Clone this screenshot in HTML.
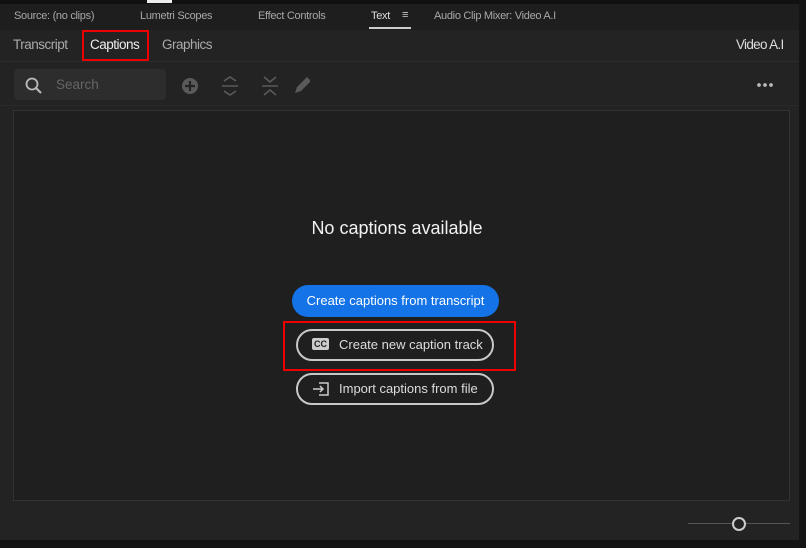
<!DOCTYPE html>
<html><head><style>
*{margin:0;padding:0;box-sizing:border-box}
body{width:806px;height:548px;background:#232323;font-family:"Liberation Sans",sans-serif;position:relative;overflow:hidden;color:#bbb}
.a{position:absolute}
.t{letter-spacing:-0.3px}
</style></head><body>
<div class="a" style="left:0;top:0;width:806px;height:4px;background:#101010"></div>
<div class="a" style="left:147px;top:0;width:25px;height:3px;background:#eee"></div>
<div class="a" style="left:0;top:4px;width:806px;height:26px;background:#1e1e1e"></div>
<div class="a" style="left:799px;top:0;width:7px;height:548px;background:#141414"></div>
<div class="a" style="left:0;top:540px;width:806px;height:8px;background:#141414"></div>
<div class="a t" style="left:14px;top:10px;font-size:11px;color:#a8a8a8">Source: (no clips)</div>
<div class="a t" style="left:140px;top:10px;font-size:11px;color:#a8a8a8">Lumetri Scopes</div>
<div class="a t" style="left:258px;top:10px;font-size:11px;color:#a8a8a8">Effect Controls</div>
<div class="a t" style="left:371px;top:10px;font-size:11px;color:#ddd">Text</div>
<div class="a" style="left:402px;top:9px;font-size:11px;color:#ccc">&#8801;</div>
<div class="a" style="left:369px;top:27px;width:42px;height:2px;background:#ccc"></div>
<div class="a t" style="left:434px;top:10px;font-size:11px;color:#a8a8a8">Audio Clip Mixer: Video A.I</div>
<div class="a" style="left:0;top:61px;width:799px;height:1px;background:#2c2c2c"></div>
<div class="a" style="left:13px;top:37px;font-size:13.5px;color:#aaa;letter-spacing:-0.5px">Transcript</div>
<div class="a" style="left:90px;top:37px;font-size:13.5px;color:#eee;letter-spacing:-0.5px">Captions</div>
<div class="a" style="left:82px;top:30px;width:67px;height:31px;border:2px solid #e00"></div>
<div class="a" style="left:162px;top:37px;font-size:13.5px;color:#aaa;letter-spacing:-0.5px">Graphics</div>
<div class="a" style="left:736px;top:37px;font-size:13.5px;color:#ddd;letter-spacing:-0.7px">Video A.I</div>
<div class="a" style="left:14px;top:69px;width:152px;height:31px;background:#2d2d2d;border-radius:4px"></div>
<svg class="a" style="left:24px;top:76px" width="20" height="20"><circle cx="8" cy="8" r="5.5" stroke="#bbb" stroke-width="1.8" fill="none"/><line x1="12" y1="12" x2="17" y2="17" stroke="#bbb" stroke-width="2"/></svg>
<div class="a" style="left:56px;top:77px;font-size:13.5px;color:#666">Search</div>
<svg class="a" style="left:180px;top:75px" width="130" height="22"><circle cx="10" cy="11" r="8" fill="#5a5a5a"/><path d="M10 6v10M5 11h10" stroke="#232323" stroke-width="2.2"/>
<path d="M44 6l6-4 6 4M44 16l6 4 6-4M42 11h16" stroke="#5a5a5a" stroke-width="1.6" fill="none"/>
<path d="M84 2l6 5 6-5M84 20l6-5 6 5M82 11h16" stroke="#5a5a5a" stroke-width="1.6" fill="none"/>
<path d="M115 18l2-6 10-10 4 4-10 10z" fill="#5a5a5a"/></svg>
<div class="a" style="left:756px;top:83px;width:18px;height:4px;background:radial-gradient(circle,#bbb 1.7px,transparent 2px) 0 0/6px 4px"></div>
<div class="a" style="left:0;top:105px;width:799px;height:1px;background:#2a2a2a"></div>
<div class="a" style="left:13px;top:110px;width:777px;height:391px;border:1px solid #333;background:#1f1f1f"></div>
<div class="a" style="left:0;top:218px;width:794px;text-align:center;font-size:18px;color:#f2f2f2">No captions available</div>
<div class="a" style="left:292px;top:285px;width:207px;height:32px;background:#1473e6;border-radius:16px;color:#fff;font-size:13px;text-align:center;line-height:32px">Create captions from transcript</div>
<div class="a" style="left:283px;top:321px;width:233px;height:50px;border:2px solid #e00"></div>
<div class="a" style="left:296px;top:329px;width:198px;height:32px;border:2px solid #c8c8c8;border-radius:16px;color:#ddd;font-size:13px;line-height:28px;padding-left:41px">Create new caption track</div>
<div class="a" style="left:312px;top:338px;width:17px;height:12px;background:#ccc;border-radius:2px;color:#222;font-size:9px;font-weight:bold;line-height:12px;text-align:center">CC</div>
<div class="a" style="left:296px;top:373px;width:198px;height:32px;border:2px solid #c8c8c8;border-radius:16px;color:#ddd;font-size:13px;line-height:28px;padding-left:41px">Import captions from file</div>
<svg class="a" style="left:311px;top:380px" width="20" height="18"><path d="M8 3h9v12H8M2 9h10M9 6l3 3-3 3" stroke="#ccc" stroke-width="1.5" fill="none"/></svg>
<div class="a" style="left:688px;top:523px;width:102px;height:1px;background:#555"></div>
<div class="a" style="left:732px;top:517px;width:14px;height:14px;border:2px solid #ccc;border-radius:50%;background:#232323"></div>
</body></html>
